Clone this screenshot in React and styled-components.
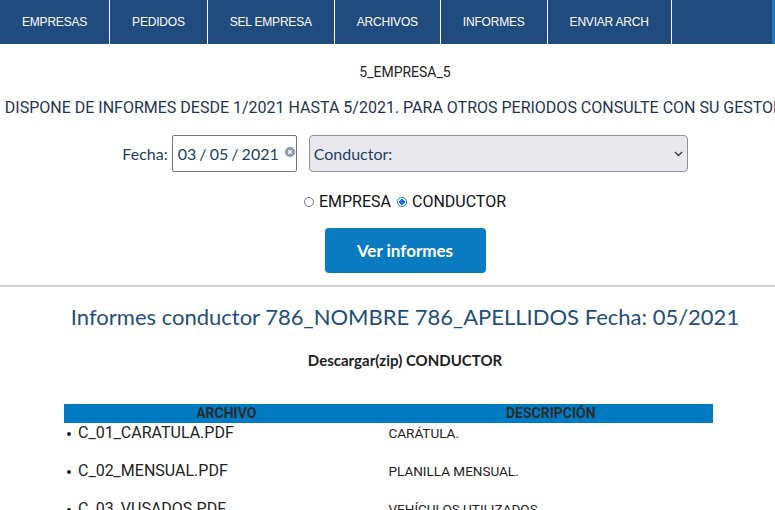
import React from "react";
import styled, { createGlobalStyle } from "styled-components";

const GlobalStyle = createGlobalStyle`
  html, body {
    margin: 0;
    padding: 0;
    overflow: hidden;
    background: #fff;
  }
`;

const navItems = [
  "EMPRESAS",
  "PEDIDOS",
  "SEL EMPRESA",
  "ARCHIVOS",
  "INFORMES",
  "ENVIAR ARCH",
];

const files = [
  { name: "C_01_CARATULA.PDF", desc: "CARÁTULA." },
  { name: "C_02_MENSUAL.PDF", desc: "PLANILLA MENSUAL." },
  { name: "C_03_VUSADOS.PDF", desc: "VEHÍCULOS UTILIZADOS." },
];

const App = () => {
  return (
    <Page>
      <GlobalStyle />
      <Nav>
        {navItems.map((item) => (
          <NavItem key={item}>{item}</NavItem>
        ))}
      </Nav>
      <Main>
        <Company>5_EMPRESA_5</Company>
        <Notice>
          DISPONE DE INFORMES DESDE 1/2021 HASTA 5/2021. PARA OTROS PERIODOS
          CONSULTE CON SU GESTOR.
        </Notice>
        <FilterRow>
          <Label>Fecha:</Label>
          <DateBox>
            <DateText>03 / 05 / 2021</DateText>
            <ClearIcon>
              <svg width="10" height="10" viewBox="0 0 10 10">
                <circle cx="5" cy="5" r="5" fill="#8e9aab" />
                <path
                  d="M3.2 3.2 L6.8 6.8 M6.8 3.2 L3.2 6.8"
                  stroke="#fff"
                  strokeWidth="1.3"
                />
              </svg>
            </ClearIcon>
          </DateBox>
          <SelectBox>
            Conductor:
            <svg width="9" height="6" viewBox="0 0 9 6">
              <path
                d="M1 1 L4.5 4.5 L8 1"
                fill="none"
                stroke="#333"
                strokeWidth="1.3"
              />
            </svg>
          </SelectBox>
        </FilterRow>
        <RadioRow>
          <RadioLabel>
            <Radio />
            EMPRESA
          </RadioLabel>
          <RadioLabel>
            <Radio $checked />
            CONDUCTOR
          </RadioLabel>
        </RadioRow>
        <Button>Ver informes</Button>
      </Main>
      <Rule />
      <Main>
        <Title>Informes conductor 786_NOMBRE 786_APELLIDOS Fecha: 05/2021</Title>
        <Download>Descargar(zip) CONDUCTOR</Download>
      </Main>
      <Table>
        <HeadRow>
          <HeadCell>ARCHIVO</HeadCell>
          <HeadCell>DESCRIPCIÓN</HeadCell>
        </HeadRow>
        {files.map((f) => (
          <Row key={f.name}>
            <FileCell>{f.name}</FileCell>
            <DescCell>{f.desc}</DescCell>
          </Row>
        ))}
      </Table>
    </Page>
  );
};

const Page = styled.div`
  width: 775px;
  height: 510px;
  overflow: hidden;
`;

const Nav = styled.nav`
  display: flex;
  height: 44px;
  background: #1f4b7e;
  border-right: 3px solid #1a78c2;
`;

const NavItem = styled.div`
  display: flex;
  align-items: center;
  padding: 0 22px;
  border-right: 1px solid #fff;
  font-family: "Liberation Sans", Arial, sans-serif;
  font-size: 12px;
  letter-spacing: -0.2px;
  color: #fff;
`;

const Main = styled.div`
  width: 810px;
  display: flex;
  flex-direction: column;
  align-items: center;
`;

const Company = styled.div`
  margin-top: 19px;
  font-family: Roboto, sans-serif;
  font-size: 14px;
  line-height: 18px;
  color: #222;
`;

const Notice = styled.div`
  margin: 17px 18px 0 0;
  white-space: nowrap;
  font-family: Roboto, sans-serif;
  font-size: 16px;
  line-height: 20px;
  color: #1f3350;
`;

const FilterRow = styled.div`
  display: flex;
  align-items: center;
  gap: 4px;
  margin-top: 17px;
  font-family: Lato, sans-serif;
  font-size: 16px;
`;

const Label = styled.span`
  color: #1f3d66;
`;

const DateBox = styled.div`
  display: flex;
  align-items: center;
  gap: 6px;
  box-sizing: border-box;
  width: 125px;
  height: 37px;
  padding: 0 3px 0 5px;
  border: 1px solid #767676;
  border-radius: 2px;
  color: #1f3d66;
  margin-right: 8px;
`;

const DateText = styled.span`
  white-space: nowrap;
  word-spacing: -1px;
`;

const ClearIcon = styled.span`
  display: flex;
  margin-top: -3px;
`;

const SelectBox = styled.div`
  display: flex;
  align-items: center;
  justify-content: space-between;
  box-sizing: border-box;
  width: 379px;
  height: 37px;
  padding: 0 4px 0 4px;
  background: #e9e9ed;
  border: 1px solid #8f8f9d;
  border-radius: 4px;
  color: #1f3d66;
`;

const RadioRow = styled.div`
  display: flex;
  gap: 6px;
  margin-top: 20px;
  font-family: Roboto, sans-serif;
  font-size: 16px;
  line-height: 20px;
  color: #111;
`;

const RadioLabel = styled.label`
  display: flex;
  align-items: center;
  gap: 5px;
`;

const Radio = styled.span`
  box-sizing: border-box;
  width: 10px;
  height: 10px;
  border-radius: 50%;
  border: 1px solid ${(p) => (p.$checked ? "#1a73e8" : "#767676")};
  background: ${(p) =>
    p.$checked ? "radial-gradient(circle, #1a73e8 45%, #fff 52%)" : "#fff"};
`;

const Button = styled.button`
  margin-top: 16px;
  width: 161px;
  height: 45px;
  border: none;
  border-radius: 4px;
  background: #0a7bc1;
  color: #fff;
  font-family: Lato, sans-serif;
  font-weight: 700;
  font-size: 17px;
`;

const Rule = styled.hr`
  margin: 12px 0 0;
  border: none;
  border-top: 2px solid #d0d0d0;
`;

const Title = styled.h2`
  margin: 16px 0 0;
  font-family: Lato, sans-serif;
  font-weight: 400;
  font-size: 22px;
  line-height: 28px;
  color: #1f4e79;
`;

const Download = styled.div`
  margin-top: 21px;
  font-family: Lato, sans-serif;
  font-weight: 700;
  font-size: 15px;
  line-height: 16px;
  color: #222;
`;

const Table = styled.div`
  width: 649px;
  margin: 36px 0 0 64px;
  font-family: Roboto, sans-serif;
`;

const HeadRow = styled.div`
  display: grid;
  grid-template-columns: 1fr 1fr;
  height: 19px;
  background: #007bc1;
`;

const HeadCell = styled.div`
  text-align: center;
  font-weight: 700;
  font-size: 14px;
  line-height: 19px;
  color: #2b2b2b;
`;

const Row = styled.div`
  display: grid;
  grid-template-columns: 1fr 1fr;
  align-items: baseline;
  height: 38px;
  line-height: 20px;
  color: #222;
`;

const FileCell = styled.div`
  position: relative;
  padding-left: 14px;
  font-size: 16px;

  &::before {
    content: "";
    position: absolute;
    left: 3px;
    top: 9px;
    width: 4px;
    height: 4px;
    border-radius: 50%;
    background: #222;
  }
`;

const DescCell = styled.div`
  font-size: 13.5px;
`;

export default App;
